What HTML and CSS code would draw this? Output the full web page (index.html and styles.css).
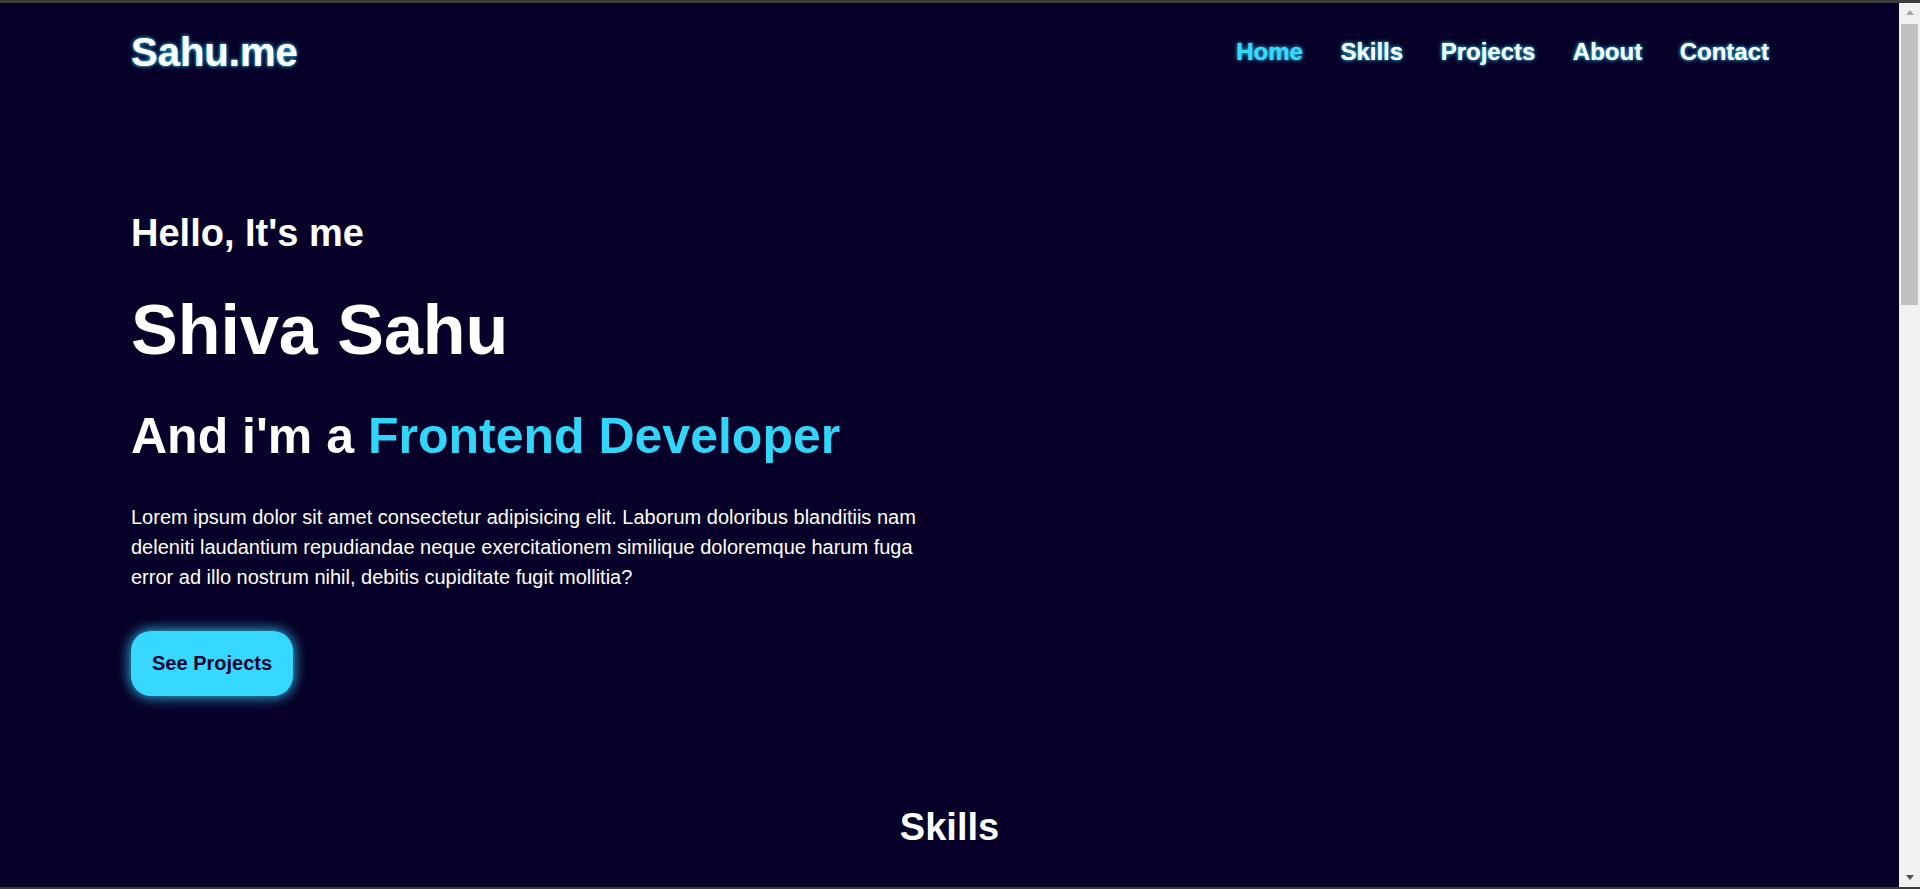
FILE: index.html
```html
<!DOCTYPE html>
<html lang="en">
<head>
<meta charset="utf-8">
<title>Sahu.me</title>
<link rel="stylesheet" href="styles.css">
</head>
<body>
<div class="window">
  <div class="page">
    <header class="header">
      <a class="logo" href="#">Sahu.me</a>
      <nav class="nav">
        <a class="nav-link active" href="#">Home</a>
        <a class="nav-link" href="#">Skills</a>
        <a class="nav-link" href="#">Projects</a>
        <a class="nav-link" href="#">About</a>
        <a class="nav-link" href="#">Contact</a>
      </nav>
    </header>
    <section class="hero">
      <h3 class="hello">Hello, It's me</h3>
      <h1 class="name">Shiva Sahu</h1>
      <h3 class="role">And i'm a <span class="accent">Frontend Developer</span></h3>
      <p class="intro">Lorem ipsum dolor sit amet consectetur adipisicing elit. Laborum doloribus blanditiis nam deleniti laudantium repudiandae neque exercitationem similique doloremque harum fuga error ad illo nostrum nihil, debitis cupiditate fugit mollitia?</p>
      <a class="btn" href="#">See Projects</a>
    </section>
    <section class="skills">
      <h2 class="section-title">Skills</h2>
    </section>
  </div>
  <div class="scrollbar">
    <div class="sb-btn"><span class="arrow-up"></span></div>
    <div class="sb-thumb"></div>
    <div class="sb-track"></div>
    <div class="sb-btn sb-btn-down"><span class="arrow-down"></span></div>
  </div>
</div>
</body>
</html>
```

FILE: styles.css
```css
* {
  box-sizing: border-box;
}

html, body {
  margin: 0;
  padding: 0;
  height: 889px;
  overflow: hidden;
}

body {
  font-family: "Liberation Sans", Arial, sans-serif;
  background: #3c3c3c;
  color: #ffffff;
}

.window {
  height: 889px;
  display: flex;
  border-top: 3px solid #3c3c3c;
  border-bottom: 2px solid #3c3c3c;
}

.page {
  flex: 1;
  background: #070028;
  overflow: hidden;
  display: flex;
  flex-direction: column;
}

a {
  text-decoration: none;
}

.header {
  display: flex;
  align-items: center;
  justify-content: space-between;
  padding: 25.5px 130px 0 131px;
}

.logo {
  font-size: 40px;
  line-height: 46px;
  font-weight: 700;
  color: #ffffff;
  text-shadow: 0 0 4px #3fd8ff, 0 0 1px #3fd8ff;
}

.nav {
  display: flex;
  gap: 37.5px;
}

.nav-link {
  font-size: 24px;
  line-height: 28px;
  font-weight: 700;
  color: #ffffff;
  text-shadow: 0 0 4px #3fd8ff, 0 0 1px #3fd8ff;
}

.nav-link.active {
  color: #35d8fe;
}

.hero {
  padding: 136px 130px 0 131px;
  display: flex;
  flex-direction: column;
  align-items: flex-start;
}

.hello {
  margin: 0;
  font-size: 38px;
  line-height: 44px;
  font-weight: 700;
}

.name {
  margin: 35px 0 0 0;
  font-size: 70px;
  line-height: 80px;
  font-weight: 700;
}

.role {
  margin: 36px 0 0 0;
  font-size: 50px;
  line-height: 60px;
  font-weight: 700;
}

.accent {
  color: #31d5f8;
}

.intro {
  margin: 36px 0 0 0;
  width: 800px;
  font-size: 20px;
  line-height: 30px;
}

.btn {
  margin-top: 39px;
  display: inline-block;
  padding: 21px 21px;
  border-radius: 20px;
  background: #37d8ff;
  color: #0b0533;
  font-size: 20px;
  line-height: 23px;
  font-weight: 700;
  box-shadow: 0 0 14px #37d8ff;
}

.skills {
  margin-top: 109.5px;
  text-align: center;
}

.section-title {
  margin: 0;
  font-size: 38px;
  line-height: 44px;
  font-weight: 700;
}

.scrollbar {
  width: 21px;
  background: #f1f1f1;
  display: flex;
  flex-direction: column;
  padding: 0 2px;
}

.sb-btn {
  height: 21px;
  display: flex;
  align-items: center;
  justify-content: center;
  padding-bottom: 2px;
}

.sb-btn-down {
  padding-bottom: 0;
  padding-top: 2px;
}

.arrow-up {
  width: 0;
  height: 0;
  border-left: 4.5px solid transparent;
  border-right: 4.5px solid transparent;
  border-bottom: 5px solid #a3a3a3;
}

.arrow-down {
  width: 0;
  height: 0;
  border-left: 4.5px solid transparent;
  border-right: 4.5px solid transparent;
  border-top: 5px solid #505050;
}

.sb-thumb {
  height: 281px;
  background: #c1c1c1;
}

.sb-track {
  flex: 1;
}
```
